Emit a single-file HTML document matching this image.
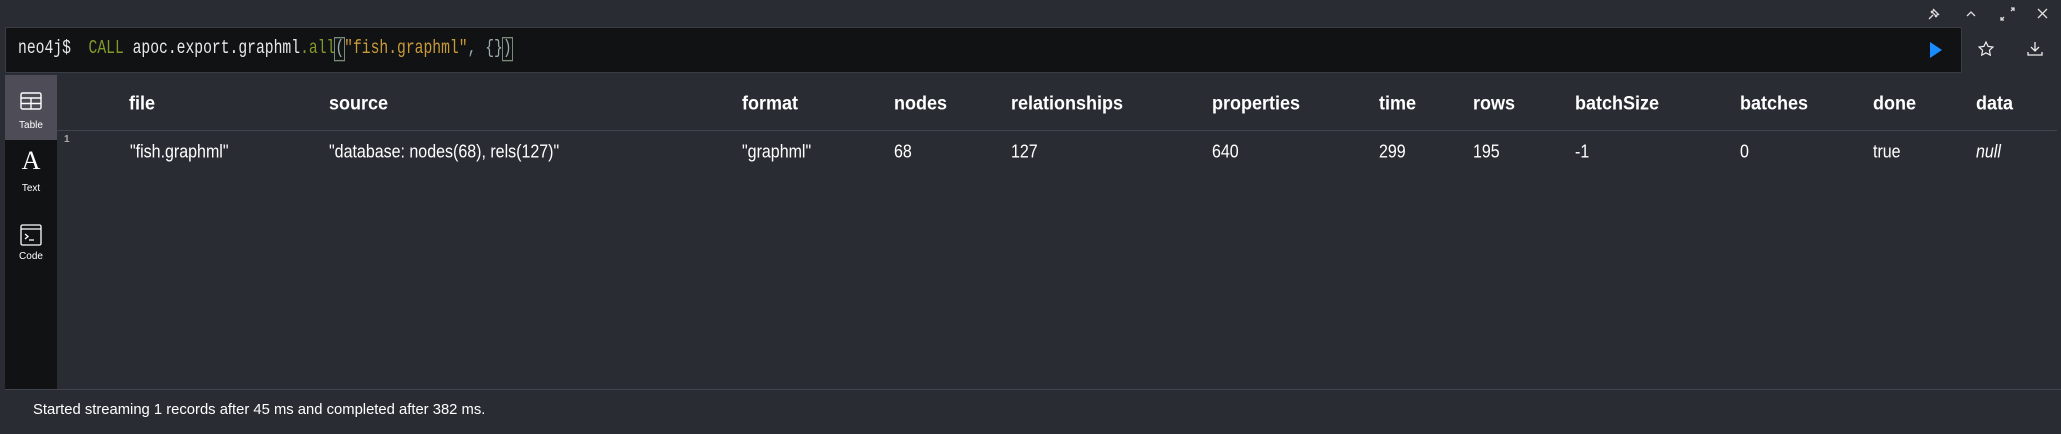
<!DOCTYPE html>
<html><head><meta charset="utf-8"><style>
*{margin:0;padding:0;box-sizing:border-box}
body{width:2061px;height:434px;background:#292c33;position:relative;overflow:hidden;font-family:"Liberation Sans",Arial,sans-serif;color:#fff}
.abs{position:absolute}
#ed{left:5px;top:27px;width:1957px;height:46px;background:#111213;border:1px solid #3a3d44;border-radius:2px}
#code{left:12px;top:9px;font-family:"Liberation Mono",monospace;font-size:14.7px;white-space:pre;color:#e8e8e8;transform:scaleY(1.35);transform-origin:0 0;line-height:18px}
.g{color:#7f9a2a}.o{color:#c99a3a}.d{color:#9aa}
.bx{outline:1px solid #7a8a7a;outline-offset:0px}
#side{left:5px;top:75px;width:52px;height:315px;background:#111213}
#tab{left:5px;top:75px;width:52px;height:65px;background:#4d4c57}
.lbl{font-size:10px;color:#fff;width:52px;text-align:center}
.h{top:93px;font-weight:bold;font-size:18px;color:#fff;transform:scaleY(1.1)}
.v{top:144px;font-size:16px;color:#fff;transform:scaleY(1.15)}
#line{left:57px;top:130px;width:2000px;height:1px;background:#40444c}
#fline{left:5px;top:389px;width:2056px;height:1px;background:#40444c}
</style></head><body>
<svg class="abs" style="left:1925px;top:5px" width="130" height="18" viewBox="0 0 130 18" fill="none" stroke="#ddd" stroke-width="1.3">
<path d="M4 14l4-4M6 6l6 6M8 4l6 6M9 5l-3 3M13 9l-3 3"/>
<path d="M42 11l4-4 4 4"/>
<path d="M79 12l-3 3M79 15h-3v-3M86 6l3-3M86 3h3v3"/>
<path d="M113 4l9 9M122 4l-9 9"/>
</svg>
<div id="ed" class="abs"><div id="code" class="abs">neo4j$  <span class="g">CALL</span> apoc.export.graphml<span class="g">.all</span><span class="bx d">(</span><span class="o">"fish.graphml"</span><span class="d">, {}</span><span class="bx d">)</span></div>
<svg class="abs" style="left:1922px;top:13px" width="16" height="18"><path d="M2 1L14 9L2 17Z" fill="#1a8cff"/></svg>
</div>
<svg class="abs" style="left:1977px;top:40px" width="18" height="18" fill="none" stroke="#eee" stroke-width="1.2"><path d="M9 2l2.1 4.4 4.8.6-3.5 3.3.9 4.8L9 12.8 4.7 15.1l.9-4.8L2.1 7l4.8-.6z"/></svg>
<svg class="abs" style="left:2026px;top:40px" width="18" height="18" fill="none" stroke="#eee" stroke-width="1.3"><path d="M9 2v9M5 7l4 4 4-4M2 12v3h14v-3"/></svg>
<div id="side" class="abs"></div>
<div id="tab" class="abs"></div>
<svg class="abs" style="left:20px;top:92px" width="22" height="18" fill="none" stroke="#fff" stroke-width="1.4"><rect x="1" y="1" width="20" height="16" rx="1.5"/><path d="M1 6h20M1 11.5h20M11 6v11"/></svg>
<div class="abs lbl" style="left:5px;top:120px">Table</div>
<div class="abs" style="left:5px;top:146px;width:52px;text-align:center;font-family:'Liberation Serif',serif;font-size:26px;font-weight:normal;color:#fff">A</div>
<div class="abs lbl" style="left:5px;top:183px">Text</div>
<svg class="abs" style="left:20px;top:224px" width="22" height="22" fill="none" stroke="#fff" stroke-width="1.3"><rect x="1" y="1" width="20" height="20" rx="1.5"/><path d="M1 5h20M5 10l3 2.5-3 2.5M9 16h5"/></svg>
<div class="abs lbl" style="left:5px;top:251px">Code</div>
<div class="abs" style="left:64px;top:134px;font-size:10px;color:#aaa;font-weight:bold">1</div>
<div id="line" class="abs"></div>
<div class="abs h" style="left:129px">file</div>
<div class="abs h" style="left:329px">source</div>
<div class="abs h" style="left:742px">format</div>
<div class="abs h" style="left:894px">nodes</div>
<div class="abs h" style="left:1011px">relationships</div>
<div class="abs h" style="left:1212px">properties</div>
<div class="abs h" style="left:1379px">time</div>
<div class="abs h" style="left:1473px">rows</div>
<div class="abs h" style="left:1575px">batchSize</div>
<div class="abs h" style="left:1740px">batches</div>
<div class="abs h" style="left:1873px">done</div>
<div class="abs h" style="left:1976px">data</div>
<div class="abs v" style="left:130px">"fish.graphml"</div>
<div class="abs v" style="left:329px">"database: nodes(68), rels(127)"</div>
<div class="abs v" style="left:742px">"graphml"</div>
<div class="abs v" style="left:894px">68</div>
<div class="abs v" style="left:1011px">127</div>
<div class="abs v" style="left:1212px">640</div>
<div class="abs v" style="left:1379px">299</div>
<div class="abs v" style="left:1473px">195</div>
<div class="abs v" style="left:1575px">-1</div>
<div class="abs v" style="left:1740px">0</div>
<div class="abs v" style="left:1873px">true</div>
<div class="abs v" style="left:1976px;font-style:italic">null</div>
<div id="fline" class="abs"></div>
<div class="abs" style="left:33px;top:402px;font-size:14.8px;color:#fff">Started streaming 1 records after 45 ms and completed after 382 ms.</div>
</body></html>
